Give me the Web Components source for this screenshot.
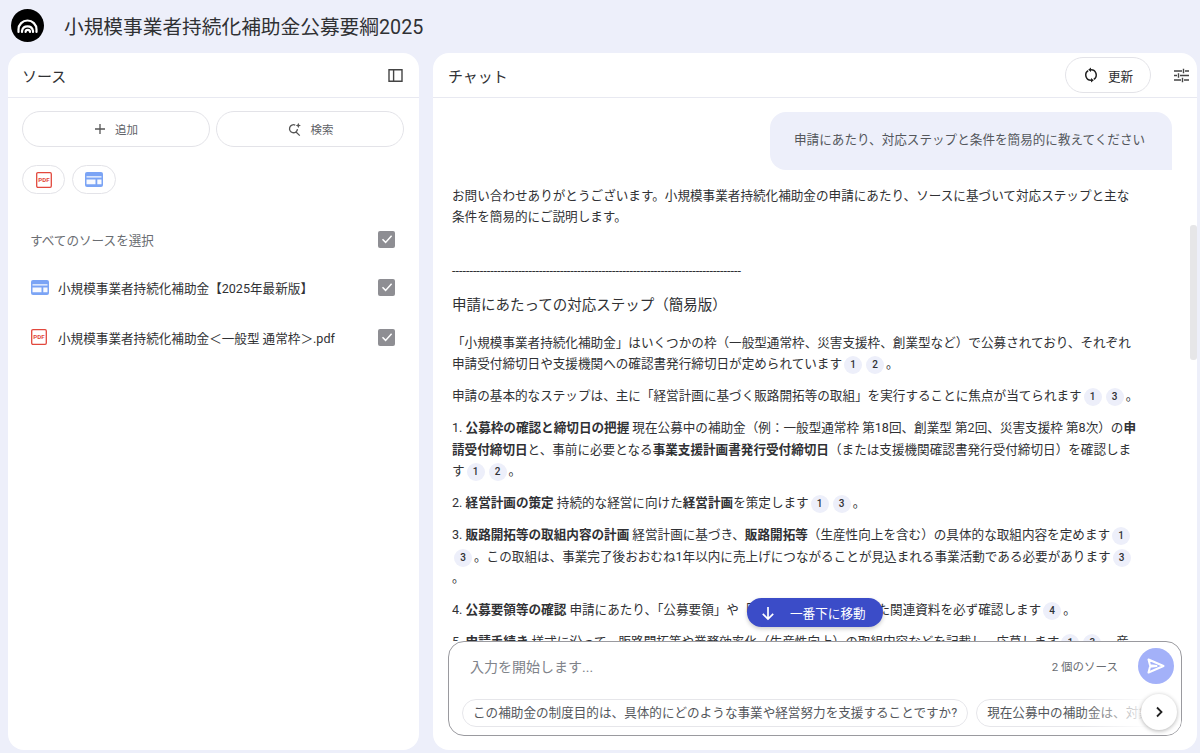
<!DOCTYPE html>
<html lang="ja">
<head>
<meta charset="utf-8">
<title>小規模事業者持続化補助金公募要綱2025</title>
<style>
    html, body{
        margin: 0;
        height: 100%;
        overflow: hidden;
        background-color: #edeffa;
        font-family: Roboto, "Noto Sans CJK JP", sans-serif;
        color: #303134;
    }
    notebook-app{
        height: 100vh;
    }
</style>
</head>
<body>
<notebook-app>
    <app-header slot="header" title-text="小規模事業者持続化補助金公募要綱2025"></app-header>
    <source-panel slot="sources">
        <source-row label="すべてのソースを選択" muted></source-row>
        <source-row label="小規模事業者持続化補助金【2025年最新版】" icon="web"></source-row>
        <source-row label="小規模事業者持続化補助金＜一般型 通常枠＞.pdf" icon="pdf"></source-row>
    </source-panel>
    <chat-panel slot="chat">
        <user-bubble>申請にあたり、対応ステップと条件を簡易的に教えてください</user-bubble>
        <chat-para>お問い合わせありがとうございます。小規模事業者持続化補助金の申請にあたり、ソースに基づいて対応ステップと主な<br>条件を簡易的にご説明します。</chat-para>
        <chat-para kind="rule">-----------------------------------------------------------------------------------</chat-para>
        <chat-para kind="heading">申請にあたっての対応ステップ（簡易版）</chat-para>
        <chat-para>「小規模事業者持続化補助金」はいくつかの枠（一般型通常枠、災害支援枠、創業型など）で公募されており、それぞれ<br>申請受付締切日や支援機関への確認書発行締切日が定められています<cite-chip>1</cite-chip><cite-chip>2</cite-chip>。</chat-para>
        <chat-para>申請の基本的なステップは、主に「経営計画に基づく販路開拓等の取組」を実行することに焦点が当てられます<cite-chip>1</cite-chip><cite-chip>3</cite-chip>。</chat-para>
        <chat-para>1. <b>公募枠の確認と締切日の把握</b> 現在公募中の補助金（例：一般型通常枠 第18回、創業型 第2回、災害支援枠 第8次）の<b>申<br>請受付締切日</b>と、事前に必要となる<b>事業支援計画書発行受付締切日</b>（または支援機関確認書発行受付締切日）を確認しま<br>す<cite-chip>1</cite-chip><cite-chip>2</cite-chip>。</chat-para>
        <chat-para>2. <b>経営計画の策定</b> 持続的な経営に向けた<b>経営計画</b>を策定します<cite-chip>1</cite-chip><cite-chip>3</cite-chip>。</chat-para>
        <chat-para>3. <b>販路開拓等の取組内容の計画</b> 経営計画に基づき、<b>販路開拓等</b>（生産性向上を含む）の具体的な取組内容を定めます<cite-chip>1</cite-chip><br><cite-chip>3</cite-chip>。この取組は、事業完了後おおむね1年以内に売上げにつながることが見込まれる事業活動である必要があります<cite-chip>3</cite-chip><br>。</chat-para>
        <chat-para>4. <b>公募要領等の確認</b> 申請にあたり、「公募要領」や「ガイドブック」といった関連資料を必ず確認します<cite-chip>4</cite-chip>。</chat-para>
        <chat-para>5. <b>申請手続き</b> 様式に沿って、販路開拓等や業務効率化（生産性向上）の取組内容などを記載し、応募します<cite-chip>1</cite-chip><cite-chip>3</cite-chip>。産</chat-para>
        <chat-composer slot="composer"></chat-composer>
    </chat-panel>
</notebook-app>

<script>
    ((customElements, document)=>{
        'use strict';

        const ICONS = {
            logo: '<svg width="33" height="33" viewBox="0 0 33 33"><circle cx="16.5" cy="16.5" r="16.5" fill="#000"/><g fill="none" stroke="#fff" stroke-width="2.2" stroke-linecap="round"><path d="M7.5 23v-2.5a9 9 0 0 1 18 0V23"/><path d="M11 23v-1a5.6 5.6 0 0 1 11 0v1" /><path d="M14.6 23a2 2 0 0 1 4.4 0"/></g></svg>',
            panel: '<svg width="15" height="15" viewBox="0 0 15 15"><path fill="none" stroke="#444" stroke-width="1.4" d="M1 1.7h13v11.6H1zM5.6 1.7v11.6"/></svg>',
            plus: '<svg width="12" height="12" viewBox="0 0 12 12"><path stroke="#555" stroke-width="1.3" d="M6 1v10M1 6h10"/></svg>',
            search: '<svg width="15" height="15" viewBox="0 0 15 15"><path fill="none" stroke="#555" stroke-width="1.3" d="M8.2 3.1a4 4 0 1 0 2.3 4M9 10l3.8 3.6"/><path fill="#555" d="M11.3 .8l.8 1.9 1.9.8-1.9.8-.8 1.9-.8-1.9-1.9-.8 1.9-.8z"/></svg>',
            pdf: '<svg width="16" height="16" viewBox="0 0 16 16"><rect x=".7" y=".7" width="14.6" height="14.6" rx="1.2" fill="#fff" stroke="#e2483d" stroke-width="1.3"/><text x="8" y="10.4" text-anchor="middle" font-size="6.2" font-weight="700" font-family="Roboto, sans-serif" fill="#e2483d">PDF</text></svg>',
            web: '<svg width="18" height="15" viewBox="0 0 18 15"><rect width="18" height="15" rx="2" fill="#7ba4f5"/><path fill="#fff" d="M1.5 4.3h15v1.3h-15zM1.5 7.6h9v4.6h-9zM12.3 7.6h4.2v4.6h-4.2z" opacity=".95"/></svg>',
            refresh: '<svg width="16" height="16" viewBox="0 0 16 16"><path fill="none" stroke="#222" stroke-width="1.5" d="M5.2 3.6A5.2 5.2 0 0 0 8 13.2M10.8 12.4A5.2 5.2 0 0 0 8 2.8"/><path fill="#222" d="M8 .6v4.4L5.2 2.8zM8 11v4.4l2.8-2.2z"/></svg>',
            tune: '<svg width="15" height="15" viewBox="0 0 15 15"><path stroke="#444" stroke-width="1.4" d="M0 3h8M11 3h4M0 7.5h3M6 7.5h9M0 12h7M10 12h5M9.5 .8v4.4M4.5 5.3v4.4M8.5 9.8v4.4"/></svg>',
            send: '<svg width="20" height="20" viewBox="0 0 20 20"><path fill="none" stroke="#fff" stroke-width="2" stroke-linejoin="round" d="M2.5 3.5L17.5 10 2.5 16.500 4 10.800 10.500 10 4 9.200z"/></svg>',
            down: '<svg width="16" height="16" viewBox="0 0 16 16"><path fill="none" stroke="#fff" stroke-width="1.700" d="M8 2v12M2.800 8.800L8 14l5.200-5.200"/></svg>',
            next: '<svg width="12" height="12" viewBox="0 0 12 12"><path fill="none" stroke="#222" stroke-width="1.800" d="M4 1.500L8.500 6 4 10.500"/></svg>',
            check: '<svg width="12" height="12" viewBox="0 0 12 12"><path fill="none" stroke="#fff" stroke-width="1.500" d="M1.500 6.300l3.100 3.100 6-6.600"/></svg>'
        };

        class NotebookApp extends HTMLElement{
            connectedCallback(){
                const shadowRoot = this.attachShadow({mode: 'open'});
                shadowRoot.innerHTML = `
                    <style>
                        :host{ display: flex; flex-direction: column; box-sizing: border-box; padding: 0 3px 3px 8px; }
                        .columns{ flex: 1; min-height: 0; display: grid; grid-template-columns: 411px 764px; gap: 14px; }
                    </style>
                    <slot name="header"></slot>
                    <div class="columns">
                        <slot name="sources"></slot>
                        <slot name="chat"></slot>
                    </div>`;
            }
        }

        class AppHeader extends HTMLElement{
            connectedCallback(){
                const shadowRoot = this.attachShadow({mode: 'open'});
                shadowRoot.innerHTML = `
                    <style>
                        :host{ display: flex; align-items: center; gap: 20px; height: 53px; padding: 0 0 3px 3px; box-sizing: border-box; }
                        svg{ display: block; }
                        h1{ margin: 0; font-size: 19.700px; font-weight: 400; color: #303134; white-space: nowrap; }
                    </style>
                    ${ICONS.logo}
                    <h1>${this.getAttribute('title-text')}</h1>`;
            }
        }

        class SourcePanel extends HTMLElement{
            connectedCallback(){
                const shadowRoot = this.attachShadow({mode: 'open'});
                shadowRoot.innerHTML = `
                    <style>
                        :host{ display: block; background: #fff; border-radius: 16px; overflow: hidden; min-height: 0; }
                        header{ display: flex; align-items: center; justify-content: space-between; height: 44px; padding: 0 16px 0 14px; border-bottom: 1px solid #e8e9f1; font-size: 15px; color: #303134; }
                        svg{ display: block; }
                        .actions{ display: flex; gap: 6px; padding: 13px 15px 0 14px; }
                        .action{ flex: 1; height: 36px; box-sizing: border-box; border: 1px solid #e3e3e8; border-radius: 18px; display: flex; align-items: center; justify-content: center; gap: 9px; font-size: 11.500px; color: #5f6368; }
                        .kinds{ display: flex; gap: 7px; padding: 18px 14px 0; }
                        .kind{ height: 29px; box-sizing: border-box; border: 1px solid #e3e3e8; border-radius: 15px; display: flex; align-items: center; justify-content: center; }
                        .kinds .kind:nth-child(1){ width: 43px; }
                        .kinds .kind:nth-child(2){ width: 44px; }
                        .rows{ padding-top: 21px; }
                    </style>
                    <header><span>ソース</span>${ICONS.panel}</header>
                    <div class="actions">
                        <div class="action">${ICONS.plus}<span>追加</span></div>
                        <div class="action">${ICONS.search}<span>検索</span></div>
                    </div>
                    <div class="kinds">
                        <div class="kind">${ICONS.pdf}</div>
                        <div class="kind">${ICONS.web}</div>
                    </div>
                    <div class="rows"><slot></slot></div>`;
            }
        }

        class SourceRow extends HTMLElement{
            connectedCallback(){
                const shadowRoot = this.attachShadow({mode: 'open'});
                const icon = ICONS[this.getAttribute('icon')];
                shadowRoot.innerHTML = `
                    <style>
                        :host{ display: flex; align-items: center; height: 48px; padding: 0 24px 0 22px; font-size: 12.600px; color: #303134; }
                        :host([muted]){ color: #6a6d72; }
                        :host([icon="pdf"]){ height: 52px; }
                        .icon{ width: 28px; flex: none; display: flex; align-items: center; }
                        .icon svg{ display: block; margin-left: 1px; }
                        .label{ flex: 1; white-space: nowrap; }
                        .box{ width: 17px; height: 17px; border-radius: 2px; background: #8e8e93; display: flex; align-items: center; justify-content: center; }
                    </style>
                    ${icon ? `<div class="icon">${icon}</div>` : ''}
                    <div class="label">${this.getAttribute('label')}</div>
                    <div class="box">${ICONS.check}</div>`;
            }
        }

        class ChatPanel extends HTMLElement{
            connectedCallback(){
                const shadowRoot = this.attachShadow({mode: 'open'});
                shadowRoot.innerHTML = `
                    <style>
                        :host{ display: flex; flex-direction: column; position: relative; background: #fff; border-radius: 16px; overflow: hidden; min-height: 0; }
                        header{ flex: none; display: flex; align-items: center; height: 44px; padding: 0 8px 0 15px; border-bottom: 1px solid #e8e9f1; font-size: 15px; color: #303134; }
                        header span{ flex: 1; }
                        svg{ display: block; }
                        .refresh{ display: flex; align-items: center; justify-content: center; gap: 9px; width: 86px; height: 36px; box-sizing: border-box; border: 1px solid #e3e3e8; border-radius: 18px; font-size: 12.600px; color: #303134; margin-right: 23px; }
                        .messages{ flex: 1; min-height: 0; overflow: hidden; padding: 14px 25px 0 19px; }
                        .bottom{ flex: none; padding: 0 15px 14px; }
                        .scrollbar{ position: absolute; right: 0; top: 172px; width: 7px; height: 135px; background: #e6e6e8; border-radius: 3px; }
                        .jump{ position: absolute; left: 314px; top: 545px; width: 136px; height: 29px; border-radius: 15px; background: #3b4cc8; color: #fff; display: flex; align-items: center; gap: 14px; padding-left: 13px; box-sizing: border-box; font-size: 12.600px; box-shadow: 0 2px 4px rgba(0,0,0,.2); }
                    </style>
                    <header><span>チャット</span><div class="refresh">${ICONS.refresh}<span style="flex:none">更新</span></div>${ICONS.tune}</header>
                    <div class="messages"><slot></slot></div>
                    <div class="bottom"><slot name="composer"></slot></div>
                    <div class="scrollbar"></div>
                    <div class="jump">${ICONS.down}<span>一番下に移動</span></div>`;
            }
        }

        class UserBubble extends HTMLElement{
            connectedCallback(){
                const shadowRoot = this.attachShadow({mode: 'open'});
                shadowRoot.innerHTML = `
                    <style>
                        :host{ display: block; box-sizing: border-box; width: 402px; height: 58px; margin: 0 0 14.500px auto; padding: 0 24px; background: #edeffa; border-radius: 16px 16px 0 16px; font-size: 12.600px; line-height: 56px; color: #54575c; white-space: nowrap; }
                    </style>
                    <slot></slot>`;
            }
        }

        class ChatPara extends HTMLElement{
            connectedCallback(){
                const shadowRoot = this.attachShadow({mode: 'open'});
                shadowRoot.innerHTML = `
                    <style>
                        :host{ display: block; margin-bottom: 10.500px; font-size: 12.600px; line-height: 21.500px; color: #303134; white-space: nowrap; }
                        :host([kind="rule"]){ margin-top: 32px; margin-bottom: 14px; }
                        :host([kind="heading"]){ font-size: 14.500px; margin-bottom: 15px; }
                    </style>
                    <slot></slot>`;
            }
        }

        class CiteChip extends HTMLElement{
            connectedCallback(){
                const shadowRoot = this.attachShadow({mode: 'open'});
                shadowRoot.innerHTML = `
                    <style>
                        :host{ display: inline-block; width: 18px; height: 18px; margin: 0 2px; border-radius: 50%; background: #edeffa; font-size: 10px; font-weight: 500; line-height: 18px; text-align: center; vertical-align: 0; color: #303134; }
                    </style>
                    <slot></slot>`;
            }
        }

        class ChatComposer extends HTMLElement{
            connectedCallback(){
                const shadowRoot = this.attachShadow({mode: 'open'});
                shadowRoot.innerHTML = `
                    <style>
                        :host{ display: block; position: relative; box-sizing: border-box; height: 95px; border: 1px solid #9a9a9f; border-radius: 16px; background: #fff; overflow: hidden; }
                        svg{ display: block; }
                        .input{ display: flex; align-items: center; height: 48px; padding: 0 7px 0 21px; }
                        .placeholder{ flex: 1; font-size: 14px; color: #80838a; }
                        .count{ font-size: 11.500px; color: #6a6d72; margin-right: 20px; }
                        .send{ width: 36px; height: 36px; border-radius: 50%; background: #a3b1f9; display: flex; align-items: center; justify-content: center; }
                        .chips{ display: flex; gap: 8px; padding: 9px 0 0 13px; white-space: nowrap; }
                        .chip{ flex: none; height: 28px; box-sizing: border-box; border: 1px solid #e6e6ea; border-radius: 14px; padding: 0 10px; font-size: 12.600px; line-height: 26px; color: #54575c; }
                        .fade{ position: absolute; right: 0; bottom: 0; width: 100px; height: 44px; background: linear-gradient(90deg, rgba(255,255,255,0), #fff 70%); }
                        .next{ position: absolute; right: 4px; bottom: 5px; width: 36px; height: 36px; border-radius: 50%; background: #fff; box-shadow: 0 1px 4px rgba(0,0,0,.3); display: flex; align-items: center; justify-content: center; }
                    </style>
                    <div class="input">
                        <div class="placeholder">入力を開始します...</div>
                        <div class="count">2 個のソース</div>
                        <div class="send">${ICONS.send}</div>
                    </div>
                    <div class="chips">
                        <div class="chip">この補助金の制度目的は、具体的にどのような事業や経営努力を支援することですか?</div>
                        <div class="chip">現在公募中の補助金は、対象者や補助上限額はどのようになっていますか?</div>
                    </div>
                    <div class="fade"></div>
                    <div class="next">${ICONS.next}</div>`;
            }
        }

        customElements.define('notebook-app', NotebookApp);
        customElements.define('app-header', AppHeader);
        customElements.define('source-panel', SourcePanel);
        customElements.define('source-row', SourceRow);
        customElements.define('chat-panel', ChatPanel);
        customElements.define('user-bubble', UserBubble);
        customElements.define('chat-para', ChatPara);
        customElements.define('cite-chip', CiteChip);
        customElements.define('chat-composer', ChatComposer);
    })(window.customElements, document);
</script>
</body>
</html>
